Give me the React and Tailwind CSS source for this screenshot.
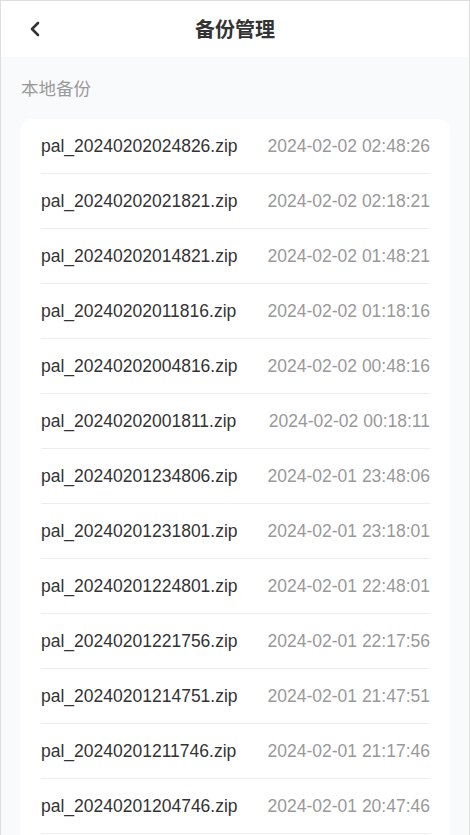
import { ChevronLeft } from 'lucide-react'

const BACKUPS = [
  ['pal_20240202024826.zip', '2024-02-02 02:48:26'],
  ['pal_20240202021821.zip', '2024-02-02 02:18:21'],
  ['pal_20240202014821.zip', '2024-02-02 01:48:21'],
  ['pal_20240202011816.zip', '2024-02-02 01:18:16'],
  ['pal_20240202004816.zip', '2024-02-02 00:48:16'],
  ['pal_20240202001811.zip', '2024-02-02 00:18:11'],
  ['pal_20240201234806.zip', '2024-02-01 23:48:06'],
  ['pal_20240201231801.zip', '2024-02-01 23:18:01'],
  ['pal_20240201224801.zip', '2024-02-01 22:48:01'],
  ['pal_20240201221756.zip', '2024-02-01 22:17:56'],
  ['pal_20240201214751.zip', '2024-02-01 21:47:51'],
  ['pal_20240201211746.zip', '2024-02-01 21:17:46'],
  ['pal_20240201204746.zip', '2024-02-01 20:47:46'],
]

export default function App() {
  return (
    <div
      className="min-h-screen bg-[#f9fafc] border border-[#dedede]"
      style={{ fontFamily: '"Liberation Sans", "Noto Sans CJK SC", sans-serif' }}
    >
      {/* Header */}
      <div className="relative h-[56px] bg-white flex items-center justify-center">
        <button className="absolute left-[22px] top-[16px] text-[#333]">
          <ChevronLeft className="w-6 h-6" strokeWidth={2.6} />
        </button>
        <h1
          className="text-[20px] font-bold text-[#333] leading-none"
          style={{ fontFamily: '"Noto Sans CJK SC", sans-serif' }}
        >
          备份管理
        </h1>
      </div>

      {/* Section label */}
      <div
        className="px-[20px] pt-[19px] pb-[19px] text-[17.5px] leading-[24px] text-[#999]"
        style={{ fontFamily: '"Noto Sans CJK SC", sans-serif' }}
      >
        本地备份
      </div>

      {/* Backup list */}
      <div className="ml-[19px] mr-[19px] bg-white rounded-[12px] pl-[21px] pr-[20px] pb-[16px]">
        {BACKUPS.map(([name, time]) => (
          <div
            key={name}
            className="h-[55px] flex items-center justify-between border-b border-[#eeeeee]"
          >
            <span className="text-[17.5px] text-[#333]">{name}</span>
            <span className="text-[17.5px] text-[#999]">{time}</span>
          </div>
        ))}
      </div>
    </div>
  )
}
